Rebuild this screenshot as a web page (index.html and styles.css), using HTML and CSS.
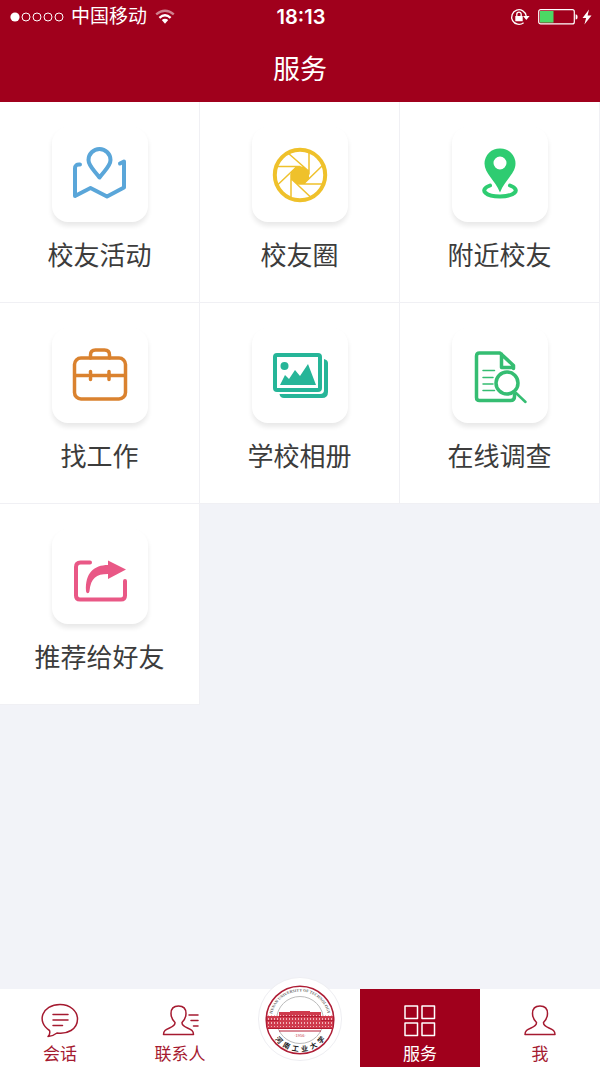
FILE: index.html
```html
<!DOCTYPE html>
<html lang="zh-CN">
<head>
<meta charset="utf-8">
<meta name="viewport" content="width=device-width, initial-scale=1">
<title>服务</title>
<link rel="stylesheet" href="styles.css">
</head>
<body>
<div class="app">
  <header class="header">
    <div class="status">
      <div class="status-left">
        <svg class="signal" width="54" height="12" viewBox="0 0 54 12" aria-hidden="true">
          <circle class="signal-on" cx="5" cy="6" r="4.600"/>
          <g class="signal-off"><circle cx="16" cy="6" r="4"/><circle cx="27" cy="6" r="4"/><circle cx="38" cy="6" r="4"/><circle cx="49" cy="6" r="4"/></g>
        </svg>
        <span class="carrier">中国移动</span>
        <svg width="20" height="16" viewBox="0 0 20 16" aria-hidden="true">
          <g fill="none" stroke="#fff" stroke-width="2.400"><path stroke-opacity=".5" d="M1.200 5.400Q10-2 18.800 5.400"/><path d="M4.400 8.800Q10 3.800 15.600 8.800"/></g>
          <path fill="#fff" d="M6.800 11Q10 8.400 13.200 11L10 14.800z"/>
        </svg>
      </div>
      <time class="clock">18:13</time>
      <div class="status-right">
        <svg class="lock" width="20" height="18" viewBox="0 0 20 18" aria-hidden="true">
          <path fill="none" stroke="#fff" stroke-width="1.300" d="M13.600 14.700A7.300 7.300 0 1 1 16.200 8"/>
          <path fill="#fff" d="M13 8h6.600l-3.300 4zM5.300 8h7.400v5.200H5.300z"/>
          <path fill="none" stroke="#fff" stroke-width="1.300" d="M6.800 8V6.300a2.200 2.200 0 0 1 4.400 0V8"/>
        </svg>
        <svg width="40" height="16" viewBox="0 0 40 16" aria-hidden="true">
          <rect x=".7" y=".7" width="35.600" height="14.200" rx="2" fill="none" stroke="#fff" stroke-width="1.200"/>
          <path fill="#4cd964" d="M2 2h13.500v11.600H2z"/>
          <path fill="#fff" d="M37.600 5.200q2 0 2 2.700t-2 2.700z"/>
        </svg>
        <svg width="10" height="16" viewBox="0 0 10 16" aria-hidden="true"><path fill="#fff" d="M7 .5L.5 9h3.600L2.400 15.500 9.500 6.400H5.600z"/></svg>
      </div>
    </div>
    <h1 class="title">服务</h1>
  </header>

  <main class="main">
    <div class="grid">
      <button class="cell" type="button">
        <span class="tile"><svg class="icon blue" viewBox="0 0 56 56" aria-hidden="true">
          <path d="M8 17.500q-5-.5-5 4V49l15.500-8L35 49.500l17-9V14.500l-4 2"/>
          <path d="M27.500 30.500C22 23 16.500 19 16.500 13a11 11 0 0 1 22 0c0 6-5.500 10-11 17.500z"/>
        </svg></span>
        <span class="label">校友活动</span>
      </button>
      <button class="cell" type="button">
        <span class="tile"><svg class="icon yellow" viewBox="0 0 56 56" aria-hidden="true">
          <circle cx="28" cy="28" r="25.200"/>
          <path class="solid" d="M24.500 19.500h7l5.500 5v7l-5 5.500h-7l-6-5v-7z"/>
          <path class="thin" d="M16 6l20.500 18M37 4.500V27M50.500 18.500L32 36.500M51 37H27M39 50.500L19 31.500M19 51V27.500M5.500 38L25 19.500M6 19.500h22"/>
        </svg></span>
        <span class="label">校友圈</span>
      </button>
      <button class="cell" type="button">
        <span class="tile"><svg class="icon green" viewBox="0 1 56 56" aria-hidden="true">
          <path class="solid" fill-rule="evenodd" d="M28 2.500a15 15 0 0 1 15.500 15c0 10-10.500 16.500-15.500 29-5-12.500-15.500-19-15.500-29a15 15 0 0 1 15.500-15zm0 8a6.500 6.500 0 1 0 0 13 6.500 6.500 0 0 0 0-13z"/>
          <path d="M18 39.500c-12 4.500-3.500 11 10 11s22-6.500 10-11"/>
        </svg></span>
        <span class="label">附近校友</span>
      </button>
      <button class="cell" type="button">
        <span class="tile"><svg class="icon medium orange" viewBox="0 3 56 56" aria-hidden="true">
          <rect x="2.500" y="13" width="51" height="41" rx="6.500"/>
          <path d="M18.500 13V10q0-5 5-5h9q5 0 5 5v3M3 30.500h13M20 30.500h15M39 30.500h14M18.500 26.500v8M37 26.500v8"/>
        </svg></span>
        <span class="label">找工作</span>
      </button>
      <button class="cell" type="button">
        <span class="tile"><svg class="icon teal" viewBox="0 2 56 56" aria-hidden="true">
          <rect x="3" y="9" width="45" height="35" rx="2"/>
          <path class="solid" d="M8 39l5-10 4 4 6-9 5 6 8-12 8 21zM52 13q4 1 4 4v29q0 6-6 6H12q-4 0-4.500-4H48q4 0 4-4z"/>
          <circle class="solid" cx="12.500" cy="20" r="4"/>
        </svg></span>
        <span class="label">学校相册</span>
      </button>
      <button class="cell" type="button">
        <span class="tile"><svg class="icon medium emerald" viewBox="0 2 56 56" aria-hidden="true">
          <path d="M42.500 48.500v2q0 4-4 4H7.500q-3 0-3-3V10q0-3 3-3H28L41.500 19.500v3M29.500 8v13.500h11"/>
          <circle cx="35" cy="37" r="11"/>
          <path d="M44 47l9.500 9" class="mid"/>
          <path class="thin" d="M11 24.500h11.500M11 31.500h10M11 38h10M11 44.500h11.500"/>
        </svg></span>
        <span class="label">在线调查</span>
      </button>
      <button class="cell" type="button">
        <span class="tile"><svg class="icon pink" viewBox="0 -3 56 56" aria-hidden="true">
          <path d="M18 10.500H8.500q-4.500 0-4.500 4.500v28.500q0 4 4 4h41q4 0 4-4V29"/>
          <path class="solid" d="M36 8.500L54 17.500 36 27v-5c-12 0-17 4-18.500 17-.5 3-3 3-3.500 0C13 21 22 13 36 13z"/>
        </svg></span>
        <span class="label">推荐给好友</span>
      </button>
    </div>
  </main>

  <nav class="tabs">
    <a class="tab" href="#chat">
      <svg class="tab-icon" viewBox="0 0 40 36" aria-hidden="true"><path d="M9.500 28.500C-4 20 2 2.500 20 2.500c10 0 17.500 6.500 17.500 14.500C37.500 27.500 27 32.500 17 31q-4.500 3.500-9 3.500 2.500-2.500 1.500-6zM13 12.500h15M13 18h15M13 23.500h9.500"/></svg>
      <span>会话</span>
    </a>
    <a class="tab" href="#contacts">
      <svg class="tab-icon" viewBox="0 0 40 36" aria-hidden="true"><path d="M18.500 4c-5 0-7.500 3-7.500 7.500 0 4 1.500 6.500 4 9 .5 5-7 5-10 8-1 1-1.500 2.500-1.500 4h30c0-1.500-.5-3-1.500-4-3-3-10.500-3-10-8 2.500-2.500 4-5 4-9C26 7 23.500 4 18.500 4zM29 13h9M31 18.500h7M33.500 24H38"/></svg>
      <span>联系人</span>
    </a>
    <a class="tab tab-home" href="#home" aria-label="河南工业大学">
      <svg class="crest" viewBox="0 0 84 84" aria-hidden="true">
        <defs>
          <path id="arc-top" d="M13.500 43a28.500 28.500 0 0 1 57 0"/>
          <path id="arc-bottom" d="M10.500 43a31.500 31.500 0 0 0 63 0"/>
          <pattern id="windows" width="3" height="4" patternUnits="userSpaceOnUse"><path class="window" d="M1 1h1v2H1z"/></pattern>
        </defs>
        <circle class="crest-back" cx="42" cy="42" r="41.500"/>
        <circle class="crest-ring" cx="42" cy="43" r="33.800"/>
        <circle class="crest-inner" cx="42" cy="43" r="23.500"/>
        <path class="building" d="M9 39h12v-4h11v-1h20v1h11v4h12v13H9z"/>
        <path fill="url(#windows)" d="M9 38h66v12H9z"/>
        <path class="cornice" d="M9 43.500h12M63 43.500h12M21 39.500h42M9 51.500h66M21 54h42"/>
        <text class="crest-latin"><textPath href="#arc-top" startOffset="50%">HENAN UNIVERSITY OF TECHNOLOGY</textPath></text>
        <text class="crest-year" x="42" y="60">·1956·</text>
        <text class="crest-name"><textPath href="#arc-bottom" startOffset="50%">河&#160;&#160;南&#160;&#160;工&#160;&#160;业&#160;&#160;大&#160;&#160;学</textPath></text>
      </svg>
    </a>
    <a class="tab tab-active" href="#services" aria-current="page">
      <svg class="tab-icon" viewBox="0 0 40 36" aria-hidden="true"><path d="M5 4h12.500v12.500H5zM22 4h12.500v12.500H22zM5 21h12.500v12.500H5zM22 21h12.500v12.500H22z"/></svg>
      <span>服务</span>
    </a>
    <a class="tab" href="#me">
      <svg class="tab-icon" viewBox="0 0 40 36" aria-hidden="true"><path d="M20 4c-5 0-7.500 3-7.500 7.500 0 4 1.500 6.500 4 9 .5 5-7 5-10 8-1 1-1.500 2.500-1.500 4h30c0-1.500-.5-3-1.500-4-3-3-10.500-3-10-8 2.500-2.500 4-5 4-9C27.500 7 25 4 20 4z"/></svg>
      <span>我</span>
    </a>
  </nav>
</div>
</body>
</html>
```
FILE: styles.css
```css
* { box-sizing: border-box; }
body {
  margin: 0;
  background: #f2f3f8;
  color: #3c3c3c;
  font-family: "Liberation Sans", "Noto Sans CJK SC", sans-serif;
}
.app { display: flex; flex-direction: column; min-height: 100vh; }

.header { background: #a0001c; color: #fff; padding-bottom: 12px; }
.status {
  display: grid;
  grid-template-columns: 1fr auto 1fr;
  align-items: center;
  height: 34px;
  padding: 0 8px 0 10px;
}
.status-left, .status-right { display: flex; align-items: center; gap: 8px; }
.status-right { justify-content: flex-end; gap: 4px; }
.lock { margin-right: 4px; }
.signal { margin-right: -1px; }
.signal-on { fill: #fff; }
.signal-off { fill: none; stroke: #fff; stroke-width: 1; }
.carrier { font-size: 19px; line-height: 32px; }
.clock { font-family: Inter, sans-serif; font-size: 20px; font-weight: 600; line-height: 32px; }
.title { margin: 0; padding-top: 16px; font-size: 27px; font-weight: 400; line-height: 40px; text-align: center; }

.main { flex: 1; }
.grid { display: grid; grid-template-columns: repeat(3, 1fr); }
.cell {
  display: flex;
  flex-direction: column;
  align-items: center;
  gap: 14px;
  padding: 25px 0 26px;
  border: 0;
  border-right: 1px solid #f0f0f4;
  border-bottom: 1px solid #f0f0f4;
  background: #fff;
  color: inherit;
  font: inherit;
}
.tile {
  display: grid;
  place-items: center;
  width: 96px;
  height: 95px;
  border-radius: 16px;
  background: #fff;
  box-shadow: 0 4px 5px #e9e9e9;
}
.label { font-size: 26px; line-height: 40px; }
.icon { width: 56px; height: 56px; fill: none; stroke: currentColor; stroke-width: 4; stroke-linecap: round; stroke-linejoin: round; }
.icon.medium { stroke-width: 3.5; }
.icon .solid { fill: currentColor; stroke: none; }
.icon .thin { stroke-width: 1.5; }
.icon .mid { stroke-width: 2.5; }
.blue { color: #5aa6d9; }
.yellow { color: #efc12b; }
.green { color: #2ecc71; }
.orange { color: #da822f; }
.teal { color: #26b598; }
.emerald { color: #35bd72; }
.pink { color: #e95886; }

.tabs { display: grid; grid-template-columns: repeat(5, 1fr); background: #fff; }
.tab {
  display: flex;
  flex-direction: column;
  align-items: center;
  gap: 2px;
  height: 78px;
  padding-top: 12px;
  color: #a51a30;
  font-size: 17px;
  line-height: 28px;
  text-decoration: none;
}
.tab-active { background: #a0001c; color: #fff; }
.tab-icon { flex: none; width: 40px; height: 38px; fill: none; stroke: currentColor; stroke-width: 1.5; stroke-linecap: round; stroke-linejoin: round; }
.tab-home { position: relative; }
.crest { position: absolute; bottom: 6px; width: 84px; height: 84px; }
.crest-back { fill: #fff; stroke: #eeeef2; }
.crest-ring { fill: none; stroke: #ae1d35; stroke-width: 1.5; }
.crest-inner { fill: none; stroke: #bbb; stroke-width: 1; }
.building { fill: #cf3b4d; }
.window { fill: #f1b5bb; }
.cornice { fill: none; stroke: #b61d34; stroke-width: 1; }
.crest-latin { fill: #666; font-family: "Liberation Serif", serif; font-size: 4px; font-weight: 700; text-anchor: middle; }
.crest-year { fill: #c93a4c; font-size: 4px; text-anchor: middle; }
.crest-name { fill: #222; font-family: "Noto Sans CJK SC", sans-serif; font-size: 7px; font-weight: 700; text-anchor: middle; }
```
